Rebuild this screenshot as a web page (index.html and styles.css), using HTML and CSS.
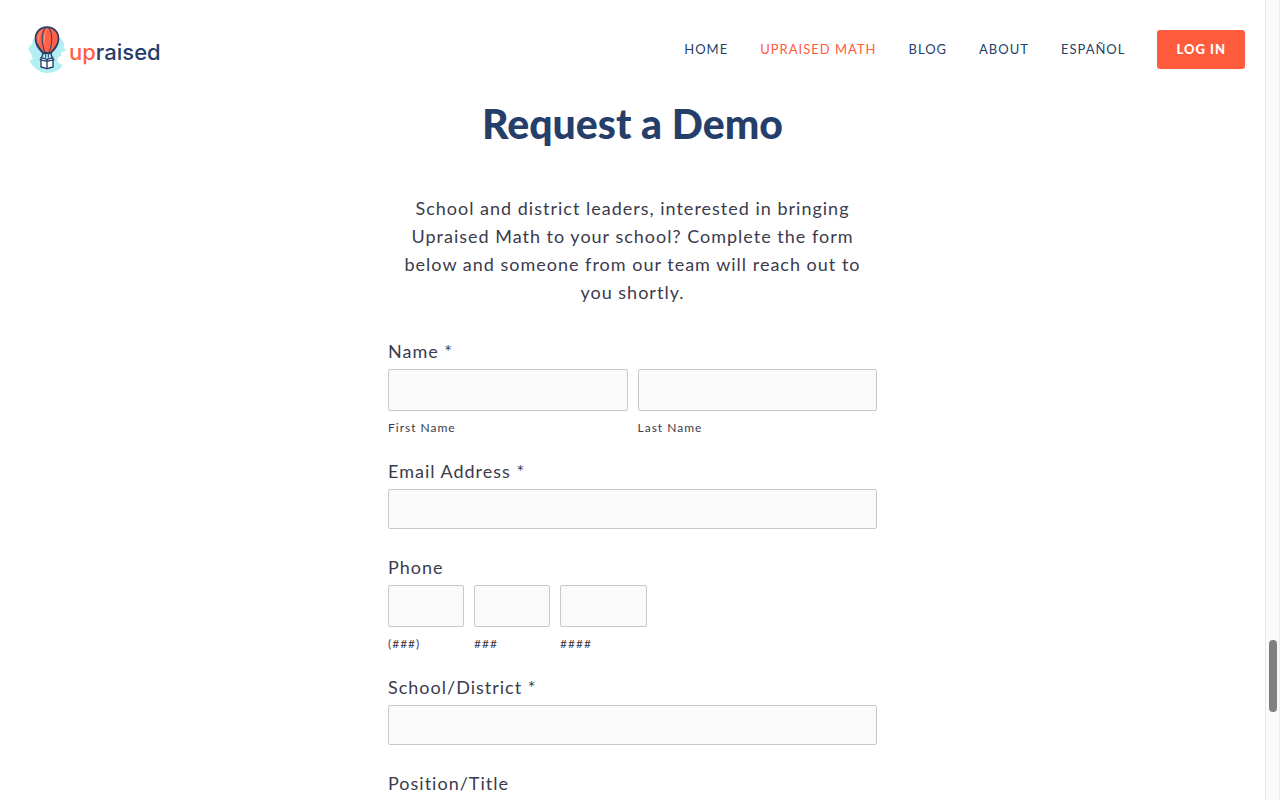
FILE: index.html
```html
<!DOCTYPE html>
<html lang="en">
<head>
<meta charset="utf-8">
<meta name="viewport" content="width=device-width, initial-scale=1">
<title>Upraised Math</title>
<link rel="stylesheet" href="styles.css">
</head>
<body>
<div class="shell">
  <div class="page">
    <header class="header">
      <a class="logo" href="#">
        <svg class="balloon" viewBox="24 18 114 144" aria-hidden="true">
          <path fill="#b3eef2" d="M49 50L38 59L37 71L29 78L24 88L30 95L35 106L39 118L28 121C38 142 59 159 80 159C102 159 121 150 128 136L114 127L112 114L123 107L123 99L138 91L131 83L132 70L120 53Z"/>
          <path fill="#263f6a" d="M81 19C59 19 44 34 44 55C44 77 57 90 69 103H93C105 90 118 77 118 55C118 34 103 19 81 19Z"/>
          <path fill="#ff6147" d="M81 24C62 24 49 37 49 55C49 73 62 86 72 97H90C101 86 113 73 113 55C113 37 100 24 81 24Z"/>
          <path fill="#ff8a75" d="M67 29C54 38 51 55 58 72C56 54 59 41 67 29ZM81 25C71 37 69 57 73 78C74 56 76 39 81 25Z"/>
          <path fill="none" stroke="#263f6a" stroke-width="3" d="M76 23C62 43 65 74 76 99M86 23C100 43 97 74 86 99"/>
          <path fill="none" stroke="#263f6a" stroke-width="4" d="M70 99H92M70 99L64 114M92 99L97 114"/>
          <path fill="#b3eef2" d="M73 103H89L94 113L81 118L68 113Z"/>
          <path fill="none" stroke="#263f6a" stroke-width="3" d="M77 101V113M85 101V113"/>
          <path fill="#fff" stroke="#263f6a" stroke-width="4" stroke-linejoin="round" d="M63 113L81 118L99 113V141L81 146L63 141Z"/>
          <path fill="none" stroke="#263f6a" stroke-width="4" d="M81 119V146M59 119L81 124L103 119"/>
        </svg>
        <span class="wordmark"><span class="up">up</span>raised</span>
      </a>
      <nav class="nav">
        <a href="#">HOME</a>
        <a class="active" href="#">UPRAISED MATH</a>
        <a href="#">BLOG</a>
        <a href="#">ABOUT</a>
        <a href="#">ESPAÑOL</a>
        <a class="login" href="#">LOG IN</a>
      </nav>
    </header>
    <main class="demo">
      <h1>Request a Demo</h1>
      <p class="intro">School and district leaders, interested in bringing Upraised Math to your school? Complete the form below and someone from our team will reach out to you shortly.</p>
      <form>
        <fieldset class="field">
          <legend>Name *</legend>
          <div class="row">
            <div class="part grow"><input id="first" type="text"><label for="first">First Name</label></div>
            <div class="part grow"><input id="last" type="text"><label for="last">Last Name</label></div>
          </div>
        </fieldset>
        <div class="field single">
          <label for="email">Email Address *</label>
          <input id="email" type="email">
        </div>
        <fieldset class="field">
          <legend>Phone</legend>
          <div class="row">
            <div class="part short"><input id="area" type="text"><label for="area">(###)</label></div>
            <div class="part short"><input id="prefix" type="text"><label for="prefix">###</label></div>
            <div class="part medium"><input id="line" type="text"><label for="line">####</label></div>
          </div>
        </fieldset>
        <div class="field single">
          <label for="school">School/District *</label>
          <input id="school" type="text">
        </div>
        <div class="field single">
          <label for="position">Position/Title</label>
          <input id="position" type="text">
        </div>
      </form>
    </main>
  </div>
  <div class="track" aria-hidden="true"><div class="thumb"></div></div>
</div>
</body>
</html>
```
FILE: styles.css
```css
* {
  box-sizing: border-box;
}

body {
  margin: 0;
  background: #fff;
  color: #3b3b4d;
  font-family: Lato, "Liberation Sans", sans-serif;
  font-size: 18px;
  line-height: 28px;
  letter-spacing: 1px;
}

.shell {
  display: grid;
  grid-template-columns: minmax(0, 1fr) 15px;
  height: 100vh;
  overflow: hidden;
}

.page {
  overflow: hidden;
}

.header {
  display: flex;
  align-items: flex-start;
  justify-content: space-between;
  padding: 26px 20px 0 28px;
}

.logo {
  display: flex;
  align-items: center;
  gap: 3px;
  color: #263f6a;
  text-decoration: none;
}

.balloon {
  width: 38px;
  height: 48px;
}

.wordmark {
  padding-top: 4px;
  font-family: Inter, sans-serif;
  font-size: 22px;
  font-weight: 500;
  letter-spacing: normal;
}

.up {
  color: #ff6147;
}

.nav {
  display: flex;
  align-items: center;
  gap: 32px;
  padding-top: 4px;
  font-size: 13px;
  line-height: 19px;
}

.nav a {
  color: #263f6a;
  text-decoration: none;
}

.nav .active {
  color: #ff5c3e;
}

.nav .login {
  padding: 10px 19px;
  border-radius: 3px;
  background: #ff5c3e;
  color: #fff;
  font-weight: 900;
}

.demo {
  max-width: 489px;
  margin: 0 auto;
}

h1 {
  margin: 26px 0 46px;
  color: #263f6a;
  font-size: 41px;
  font-weight: 900;
  line-height: 48px;
  letter-spacing: normal;
  text-align: center;
}

.intro {
  margin: 0 0 32px;
  padding: 0 8px;
  text-align: center;
}

.field {
  margin: 0 0 20px;
  padding: 0;
  border: 0;
}

.single {
  margin-bottom: 25px;
}

legend,
.single label {
  display: block;
  margin-bottom: 5px;
  padding: 0;
  line-height: 26px;
}

.row {
  display: flex;
  gap: 10px;
}

.grow {
  flex: 1;
}

.short {
  width: 76px;
}

.medium {
  width: 87px;
}

input {
  display: block;
  width: 100%;
  height: 40px;
  padding: 0 12px;
  border: 1px solid #c8c8c8;
  border-radius: 2px;
  background: #fafafa;
  color: inherit;
  font: inherit;
}

.part input {
  height: 42px;
}

.part label {
  display: block;
  margin-top: 7px;
  font-size: 12px;
  line-height: 20px;
}

.track {
  padding: 80vh 2px 0 3px;
  border-left: 1px solid #e8e8e8;
  border-right: 1px solid #ededed;
  background: #fafafa;
}

.thumb {
  height: 9vh;
  border-radius: 4px;
  background: #7f7f7f;
}
```
